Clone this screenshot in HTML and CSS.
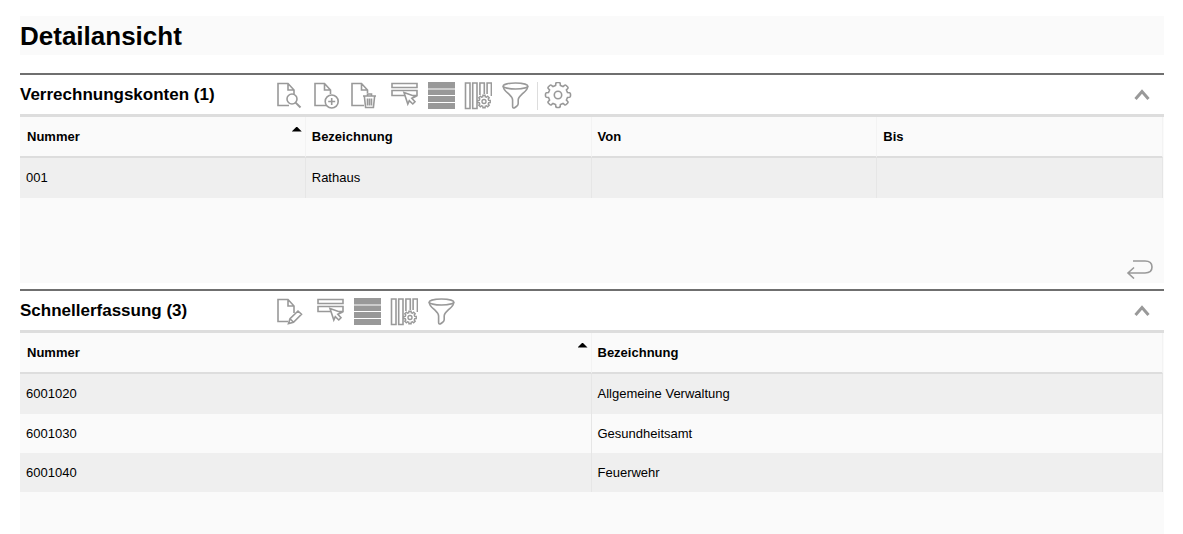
FILE: index.html
```html
<!DOCTYPE html>
<html lang="de">
<head>
<meta charset="utf-8">
<title>Detailansicht</title>
<link rel="stylesheet" href="styles.css">
</head>
<body>
<svg class="defs" aria-hidden="true">
  <defs>
    <symbol id="select" viewBox="0 0 28 28"><path d="M2 1.5H27V5.5H2ZM16 13.5H2V8.5H27V13.5H23"/><path class="white" d="M14 10.5L25.5 14.5L21.8 16.3L25 19.8L22.8 22L19.3 18.6L17.8 22Z"/></symbol>
    <symbol id="list" viewBox="0 0 28 28"><path class="solid" d="M1 0H28V6H1ZM1 8H28V13H1ZM1 14H28V20H1ZM1 21H28V27H1Z"/><path class="pale" d="M1 7H28"/></symbol>
    <symbol id="columns" viewBox="0 0 28 28"><path d="M1.5 1H6V26.5H1.5ZM8.7 1H13V26.5H8.7ZM15.9 13V1H20.3V12M23.1 12V1H27.4V14"/><use href="#cog" x="13" y="13" width="14" height="14"/></symbol>
    <symbol id="cog" viewBox="0 0 28 28" overflow="visible"><path class="cogline" d="M11.6 3.5L11.8.5H16.2L16.4 3.5L19 4.6L21.3 2.6L24.4 5.7L22.4 8L23.5 10.6L26.5 10.8V15.2L23.5 15.4L22.4 18L24.4 20.3L21.3 23.4L19 21.4L16.4 22.5L16.2 25.5H11.8L11.6 22.5L9 21.4L6.7 23.4L3.6 20.3L5.6 18L4.5 15.4L1.5 15.2V10.8L4.5 10.6L5.6 8L3.6 5.7L6.7 2.6L9 4.6Z"/><circle class="cogline" cx="14" cy="13" r="4"/></symbol>
    <symbol id="filter" viewBox="0 0 28 28"><ellipse cx="14.5" cy="4" rx="12.3" ry="3"/><path d="M2.2 4C2.2 8 5 9.5 8.2 12.4C11 15 11.6 16 11.6 18V24.5C11.6 26.3 12.8 26.4 14 25.5L16 24C17 23.2 17.2 22.5 17.2 21.5V18C17.2 16 18 15 20.8 12.4C24 9.5 26.8 8 26.8 4"/></symbol>
    <symbol id="gear" viewBox="0 0 28 28" overflow="visible"><path d="M11.6 3.5L11.8 1.5Q12 .5 13 .5H15Q16 .5 16.2 1.5L16.4 3.5L19 4.6L20.5 3.3Q21.3 2.6 22.2 3.5L23.5 4.8Q24.4 5.7 23.7 6.5L22.4 8L23.5 10.6L25.5 10.8Q26.5 11 26.5 12V14Q26.5 15 25.5 15.2L23.5 15.4L22.4 18L23.7 19.5Q24.4 20.3 23.5 21.2L22.2 22.5Q21.3 23.4 20.5 22.7L19 21.4L16.4 22.5L16.2 24.5Q16 25.5 15 25.5H13Q12 25.5 11.8 24.5L11.6 22.5L9 21.4L7.5 22.7Q6.7 23.4 5.8 22.5L4.5 21.2Q3.6 20.3 4.3 19.5L5.6 18L4.5 15.4L2.5 15.2Q1.5 15 1.5 14V12Q1.5 11 2.5 10.8L4.5 10.6L5.6 8L4.3 6.5Q3.6 5.7 4.5 4.8L5.8 3.5Q6.7 2.6 7.5 3.3L9 4.6Z"/><circle cx="14" cy="13" r="3.7"/></symbol>
    <symbol id="up" viewBox="0 0 16 12"><path class="thick" d="M1.5 10L8 2.5L14.5 10"/></symbol>
  </defs>
</svg>
<main class="page">
  <h1 class="title">Detailansicht</h1>

  <section class="section">
    <header class="bar">
      <h2 class="heading">Verrechnungskonten (1)</h2>
      <div class="tools">
        <div class="group">
          <button class="tool" aria-label="Anzeigen"><svg viewBox="0 0 28 28"><path d="M13 23.5H2V1.5H12L18 8V12M12 1.5V8H18"/><circle cx="16" cy="17" r="5"/><path class="medium" d="M19.6 20.6L24.5 25.5"/></svg></button>
          <button class="tool" aria-label="Neu"><svg viewBox="0 0 28 28"><path d="M13 23.5H2V1.5H11.5L17.5 8V12M11.5 1.5V8H17.5"/><circle cx="18.7" cy="19.5" r="6.5"/><path d="M18.7 16V23M15.2 19.5H22.2"/></svg></button>
          <button class="tool" aria-label="Löschen"><svg viewBox="0 0 28 28"><path d="M14 23.5H2V1.5H11.5L17.5 8V11M11.5 1.5V8H17.5M13 14H26M17.5 13.5V12H21.5V13.5M14.4 14.5L15.6 25.5H23.4L24.6 14.5M17.5 16.5V23.5M19.5 16.5V23.5M21.5 16.5V23.5"/></svg></button>
        </div>
        <div class="group">
          <button class="tool" aria-label="Auswahl"><svg><use href="#select"/></svg></button>
          <button class="tool" aria-label="Liste"><svg><use href="#list"/></svg></button>
          <button class="tool" aria-label="Spalten"><svg><use href="#columns"/></svg></button>
          <button class="tool" aria-label="Filter"><svg><use href="#filter"/></svg></button>
        </div>
        <div class="group settings">
          <button class="tool" aria-label="Einstellungen"><svg><use href="#gear"/></svg></button>
        </div>
      </div>
      <button class="collapse" aria-label="Einklappen"><svg><use href="#up"/></svg></button>
    </header>
    <div class="panel">
      <table class="grid">
        <thead><tr><th><div class="sorted">Nummer<span class="arrow"></span></div></th><th>Bezeichnung</th><th>Von</th><th>Bis</th></tr></thead>
        <tbody><tr><td>001</td><td>Rathaus</td><td></td><td></td></tr></tbody>
      </table>
      <div class="footer footer-tall">
        <button class="return" aria-label="Zurück"><svg viewBox="0 0 28 20"><path d="M7 2H19Q26 2 26 8Q26 14 19 14H2.5M8 8.5L2 14L8 19.5"/></svg></button>
      </div>
    </div>
  </section>

  <section class="section">
    <header class="bar">
      <h2 class="heading">Schnellerfassung (3)</h2>
      <div class="tools">
        <div class="group">
          <button class="tool" aria-label="Bearbeiten"><svg viewBox="0 0 28 28"><path d="M12 23.5H2V1.5H12L18 8V15M12 1.5V8H18M12.5 25.5L14 20.8L22 13L25.5 16.2L17.5 24.2ZM14 20.8L17.5 24.2"/></svg></button>
        </div>
        <div class="group">
          <button class="tool" aria-label="Auswahl"><svg><use href="#select"/></svg></button>
          <button class="tool" aria-label="Liste"><svg><use href="#list"/></svg></button>
          <button class="tool" aria-label="Spalten"><svg><use href="#columns"/></svg></button>
          <button class="tool" aria-label="Filter"><svg><use href="#filter"/></svg></button>
        </div>
      </div>
      <button class="collapse" aria-label="Einklappen"><svg><use href="#up"/></svg></button>
    </header>
    <div class="panel">
      <table class="grid">
        <thead><tr><th><div class="sorted">Nummer<span class="arrow"></span></div></th><th>Bezeichnung</th></tr></thead>
        <tbody>
          <tr><td>6001020</td><td>Allgemeine Verwaltung</td></tr>
          <tr><td>6001030</td><td>Gesundheitsamt</td></tr>
          <tr><td>6001040</td><td>Feuerwehr</td></tr>
        </tbody>
      </table>
      <div class="footer"></div>
    </div>
  </section>
</main>
</body>
</html>
```
FILE: styles.css
```css
* { box-sizing: border-box; }
body {
  margin: 0;
  background: #fff;
  color: #000;
  font-family: "Liberation Sans", Arial, sans-serif;
  font-size: 13px;
}
.defs { position: absolute; width: 0; height: 0; }
.page { padding: 16px 19px 0 20px; }
.title {
  margin: 0 0 18px;
  padding: 5px 0 4px;
  background: #fafafa;
  font-size: 26px;
  line-height: 30px;
}
.section + .section { margin-top: 6px; }
.bar {
  display: flex;
  align-items: center;
  height: 44px;
  border-top: 2px solid #6f6f6f;
  border-bottom: 3px solid #ddd;
}
.heading {
  flex: none;
  width: 256px;
  margin: 0;
  font-size: 17px;
  line-height: 20px;
}
.tools { display: flex; gap: 12px; padding-top: 2px; }
.group { display: flex; gap: 9px; }
.settings {
  margin-left: -4px;
  padding-left: 6px;
  border-left: 1px solid #ddd;
}
button { display: block; padding: 0; border: 0; background: none; cursor: pointer; }
svg { display: block; fill: none; stroke: #999; stroke-width: 1.6; }
.tool, .tool svg { width: 28px; height: 28px; }
.collapse { margin-left: auto; margin-right: 14px; }
.collapse svg { width: 16px; height: 12px; }
.solid { fill: #999; stroke: none; }
.pale { stroke: #ccc; stroke-width: 2; }
.white { fill: #fff; }
.medium { stroke-width: 2; }
.cogline { fill: #fff; stroke-width: 2.8; }
.thick { stroke-width: 3; }
.panel { background: #fafafa; }
.grid {
  width: calc(100% - 1px);
  border-collapse: separate;
  border-spacing: 0;
  table-layout: fixed;
}
.grid th, .grid td {
  height: 39px;
  padding: 0 6px;
  text-align: left;
  line-height: 16px;
}
.grid th {
  height: 41px;
  border-right: 1px solid #f3f3f3;
  border-bottom: 2px solid #ddd;
}
.grid th:first-child { padding-left: 7px; }
.grid td { border-right: 1px solid #e6e6e6; }
.grid tbody tr:first-child td { height: 40px; }
.grid tbody tr:nth-child(odd) { background: #efefef; }
.sorted { display: flex; justify-content: space-between; }
.arrow {
  width: 10px;
  height: 5px;
  margin-top: -2px;
  margin-right: -3px;
  background: #000;
  clip-path: polygon(50% 0, 100% 100%, 0 100%);
}
.footer { display: flex; justify-content: flex-end; align-items: flex-end; height: 42px; }
.footer-tall { height: 85px; padding: 0 10px 4px 0; }
.return svg { width: 28px; height: 20px; }
```
